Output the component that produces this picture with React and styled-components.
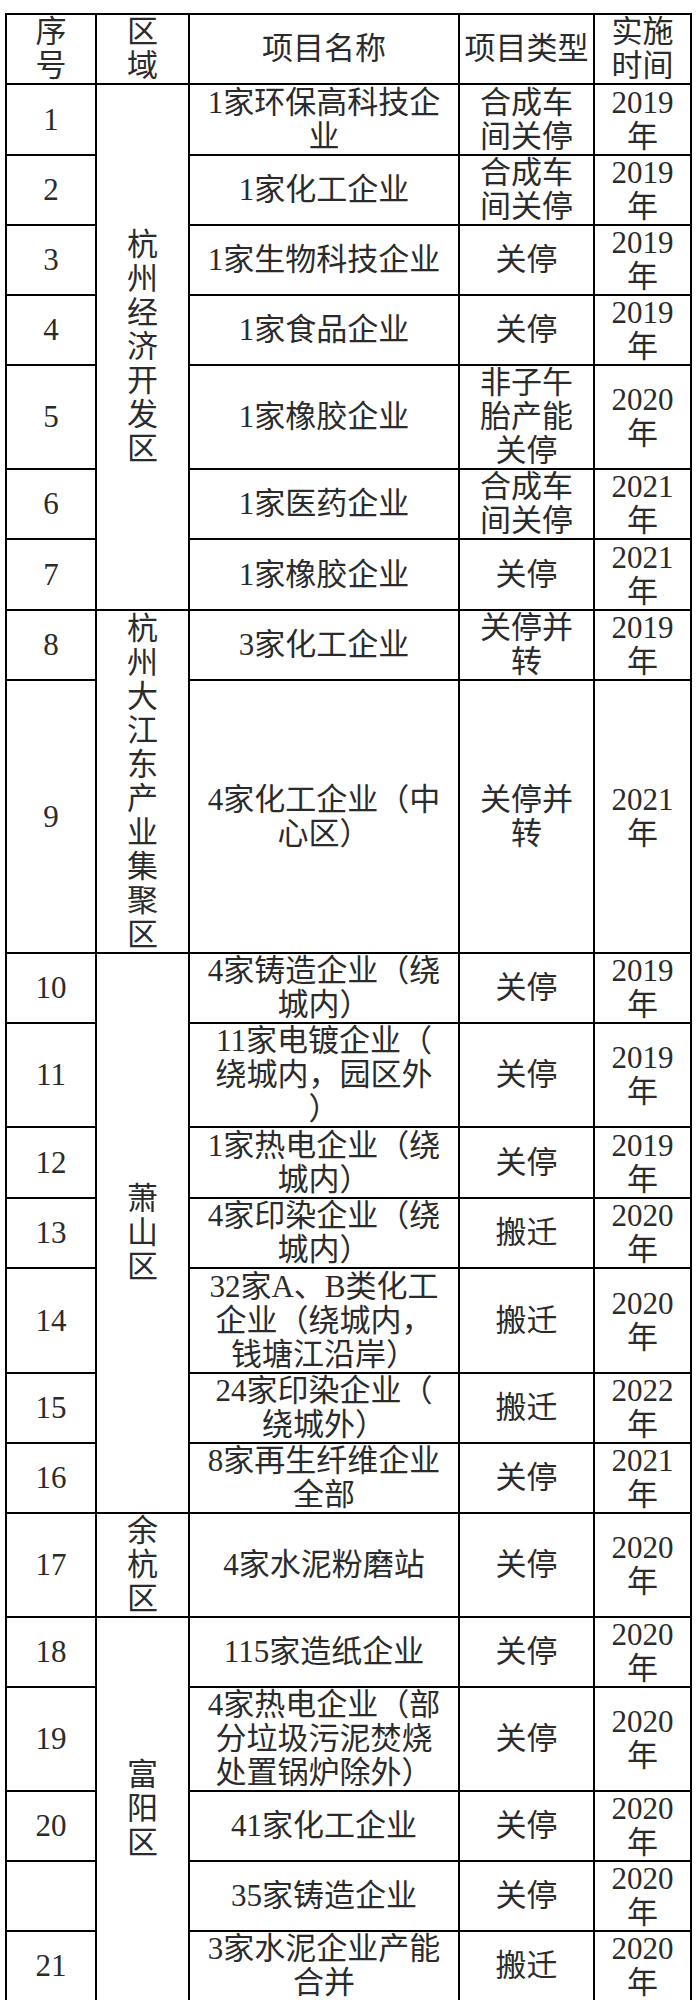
import React from "react";
import styled, { createGlobalStyle } from "styled-components";

const GlobalStyle = createGlobalStyle`
  html, body { margin: 0; padding: 0; background: #ffffff; }
  body { font-family: "Liberation Serif", "Noto Sans CJK SC", serif; color: #2b2b2b; }
`;

const Page = styled.div`
  padding: 13px 0 0 5px;
`;

const Table = styled.table`
  width: 687px;
  table-layout: fixed;
  border-collapse: collapse;
  font-family: "Liberation Serif", "Noto Sans CJK SC", serif;
  font-size: 31px;
  line-height: 34px;
  color: #2b2b2b;
`;

const Row = styled.tr`
  height: ${(p) => p.$h}px;
`;

const Cell = styled.td`
  border: 2px solid #000;
  padding: 0;
  text-align: center;
  vertical-align: middle;
  white-space: nowrap;
  overflow: hidden;
`;

const HeadCell = styled(Cell).attrs({ as: "th" })`
  font-weight: normal;
`;

const VerticalText = styled.div`
  width: 1.05em;
  margin: 0 auto;
  white-space: normal;
  word-break: break-all;
  line-height: 34px;
`;

const Line = styled.span`
  display: block;
`;

const cols = [90, 93, 270, 135, 97];

const rows = [
  { no: "1", region: { text: "杭州经济开发区", span: 7 }, name: ["1家环保高科技企", "业"], type: ["合成车", "间关停"], year: "2019", h: 71 },
  { no: "2", name: ["1家化工企业"], type: ["合成车", "间关停"], year: "2019", h: 70 },
  { no: "3", name: ["1家生物科技企业"], type: ["关停"], year: "2019", h: 70 },
  { no: "4", name: ["1家食品企业"], type: ["关停"], year: "2019", h: 70 },
  { no: "5", name: ["1家橡胶企业"], type: ["非子午", "胎产能", "关停"], year: "2020", h: 104 },
  { no: "6", name: ["1家医药企业"], type: ["合成车", "间关停"], year: "2021", h: 69 },
  { no: "7", name: ["1家橡胶企业"], type: ["关停"], year: "2021", h: 71 },
  { no: "8", region: { text: "杭州大江东产业集聚区", span: 2 }, name: ["3家化工企业"], type: ["关停并", "转"], year: "2019", h: 69 },
  { no: "9", name: ["4家化工企业（中", "心区）"], type: ["关停并", "转"], year: "2021", h: 273 },
  { no: "10", region: { text: "萧山区", span: 7 }, name: ["4家铸造企业（绕", "城内）"], type: ["关停"], year: "2019", h: 70 },
  { no: "11", name: ["11家电镀企业（", "绕城内，园区外", "）"], type: ["关停"], year: "2019", h: 103 },
  { no: "12", name: ["1家热电企业（绕", "城内）"], type: ["关停"], year: "2019", h: 71 },
  { no: "13", name: ["4家印染企业（绕", "城内）"], type: ["搬迁"], year: "2020", h: 69 },
  { no: "14", name: ["32家A、B类化工", "企业（绕城内，", "钱塘江沿岸）"], type: ["搬迁"], year: "2020", h: 105 },
  { no: "15", name: ["24家印染企业（", "绕城外）"], type: ["搬迁"], year: "2022", h: 70 },
  { no: "16", name: ["8家再生纤维企业", "全部"], type: ["关停"], year: "2021", h: 70 },
  { no: "17", region: { text: "余杭区", span: 1 }, name: ["4家水泥粉磨站"], type: ["关停"], year: "2020", h: 104 },
  { no: "18", region: { text: "富阳区", span: 5 }, name: ["115家造纸企业"], type: ["关停"], year: "2020", h: 70 },
  { no: "19", name: ["4家热电企业（部", "分垃圾污泥焚烧", "处置锅炉除外）"], type: ["关停"], year: "2020", h: 104 },
  { no: "20", name: ["41家化工企业"], type: ["关停"], year: "2020", h: 70 },
  { no: "", name: ["35家铸造企业"], type: ["关停"], year: "2020", h: 70 },
  { no: "21", name: ["3家水泥企业产能", "合并"], type: ["搬迁"], year: "2020", h: 70 },
];

function Lines({ items }) {
  return items.map((t, i) => <Line key={i}>{t}</Line>);
}

export default function App() {
  return (
    <>
      <GlobalStyle />
      <Page>
        <Table>
          <colgroup>
            {cols.map((w, i) => (
              <col key={i} style={{ width: w }} />
            ))}
          </colgroup>
          <thead>
            <Row $h={69}>
              <HeadCell><Lines items={["序", "号"]} /></HeadCell>
              <HeadCell><Lines items={["区", "域"]} /></HeadCell>
              <HeadCell>项目名称</HeadCell>
              <HeadCell>项目类型</HeadCell>
              <HeadCell><Lines items={["实施", "时间"]} /></HeadCell>
            </Row>
          </thead>
          <tbody>
            {rows.map((r, i) => (
              <Row key={i} $h={r.h}>
                <Cell>{r.no}</Cell>
                {r.region && (
                  <Cell rowSpan={r.region.span}>
                    <VerticalText>{r.region.text}</VerticalText>
                  </Cell>
                )}
                <Cell><Lines items={r.name} /></Cell>
                <Cell><Lines items={r.type} /></Cell>
                <Cell><Lines items={[r.year, "年"]} /></Cell>
              </Row>
            ))}
          </tbody>
        </Table>
      </Page>
    </>
  );
}
